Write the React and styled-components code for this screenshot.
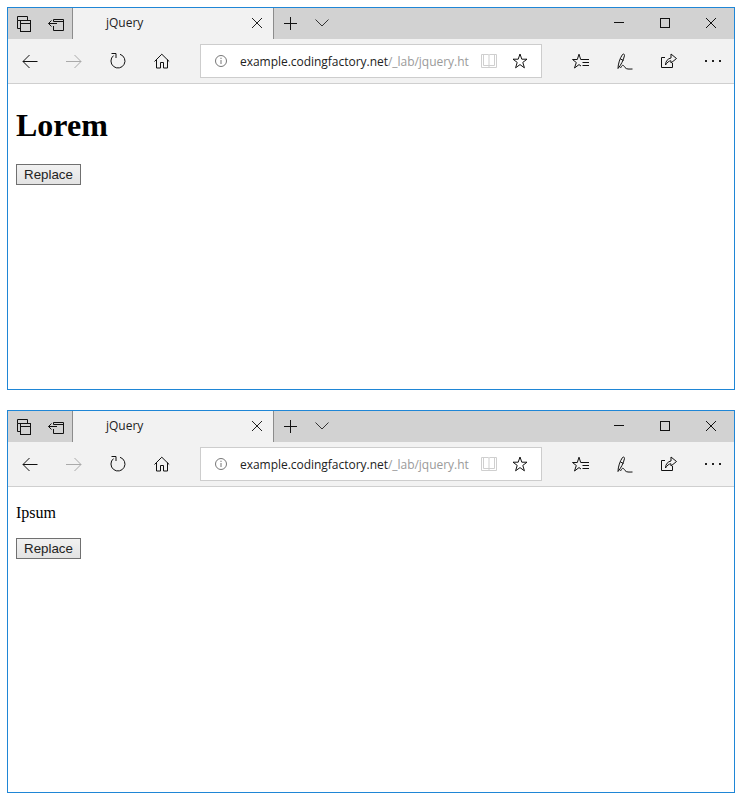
import React from "react";
import styled, { createGlobalStyle } from "styled-components";

const Global = createGlobalStyle`
  html, body { margin: 0; padding: 0; background: #fff; }
  * { box-sizing: border-box; }
`;

const Page = styled.div`
  display: flex;
  flex-direction: column;
  gap: 20px;
  padding: 7px 0 0 7px;
  width: 749px;
  height: 804px;
`;

const Window = styled.section`
  width: 728px;
  height: 383px;
  border: 1px solid #1f86d6;
  display: flex;
  flex-direction: column;
  background: #fff;
`;

const Strip = styled.header`
  display: flex;
  align-items: stretch;
  height: 31px;
  background: #d2d2d2;
  flex: none;
`;

const StripGroup = styled.div`
  display: flex;
  align-items: flex-start;
  width: ${(p) => p.$width}px;
  margin-left: ${(p) => p.$offset || 0}px;
  flex: none;
`;

const StripIcon = styled.span`
  display: flex;
  align-items: center;
  justify-content: center;
  width: ${(p) => p.$width || 32}px;
  height: 30px;
  flex: none;
`;

const Tab = styled.div`
  width: 202px;
  flex: none;
  display: flex;
  align-items: center;
  background: #f2f2f2;
  border-left: 1px solid #8c8c8c;
  border-right: 1px solid #8c8c8c;
  padding: 0 0 1px 32px;
  font: 12px "Open Sans", "Noto Sans", sans-serif;
  color: #222;
`;

const TabTitle = styled.span`
  flex: 1;
  padding: 0 0 2px 1px;
`;

const TabClose = styled.span`
  display: flex;
  justify-content: center;
  align-items: center;
  width: 32px;
  height: 100%;
`;

const Toolbar = styled.nav`
  display: flex;
  align-items: center;
  height: 45px;
  flex: none;
  background: #f2f2f2;
  border-bottom: 1px solid #cfcfcf;
`;

const ToolButton = styled.span`
  display: flex;
  align-items: center;
  justify-content: center;
  width: 44px;
  height: 44px;
  flex: none;
`;

const ToolGroup = styled.div`
  display: flex;
  flex: none;
`;

const Address = styled.div`
  display: flex;
  align-items: center;
  width: 342px;
  height: 34px;
  margin: 0 17px 0 16px;
  background: #fff;
  border: 1px solid #cdcdcd;
  flex: none;
`;

const InfoSlot = styled.span`
  display: flex;
  justify-content: center;
  width: 39px;
  flex: none;
`;

const Url = styled.div`
  width: 230px;
  flex: none;
  white-space: nowrap;
  overflow: hidden;
  font: 12px "Open Sans", "Noto Sans", sans-serif;
  letter-spacing: -0.03px;
  color: #222;
`;

const UrlPath = styled.span`
  color: #9a9a9a;
`;

const AddressIcon = styled.span`
  display: flex;
  justify-content: center;
  flex: none;
  width: ${(p) => p.$width}px;
`;

const Content = styled.main`
  flex: 1;
  padding: ${(p) => p.$top || 0}px 8px 0;
  font-family: "Liberation Serif", "Times New Roman", serif;
  color: #000;
`;

const Heading = styled.h1`
  font-size: 32px;
  font-weight: 700;
  line-height: 37px;
  margin: 23px 0 19.88px;
`;

const Para = styled.p`
  font-size: 16px;
  line-height: 18px;
  margin: 16px 0;
`;

const ReplaceButton = styled.button`
  display: block;
  width: 65px;
  height: 21px;
  margin: 0;
  padding: 0;
  border: 1px solid #707070;
  border-radius: 0;
  background: linear-gradient(#f1f1f1, #e3e3e3);
  font: 13.333px "Liberation Sans", Arial, sans-serif;
  color: #222;
`;

const Svg = ({ size = 20, children, stroke = "#111", sw = 1 }) => (
  <svg
    width={size}
    height={size}
    viewBox={`0 0 ${size} ${size}`}
    fill="none"
    stroke={stroke}
    strokeWidth={sw}
    aria-hidden="true"
  >
    {children}
  </svg>
);

const TabsAside = () => (
  <Svg>
    <path d="M6.5 7.5H3.5V3.5H13.5V7.5" />
    <path d="M3.5 7.5V15.5H6.5" />
    <rect x="6.5" y="7.5" width="10" height="11" />
    <path d="M6.5 10.5H16.5" />
  </Svg>
);

const SetAside = () => (
  <Svg>
    <path d="M7.5 8.5V6.5H17.5V17.5H7.5V13" />
    <path d="M7.5 8.5H17.5" />
    <path d="M2.5 10.5H11M5.5 7.5L2.5 10.5L5.5 13.5" />
  </Svg>
);

const CloseX = ({ s = 10, stroke = "#222" }) => (
  <Svg size={s} stroke={stroke}>
    <path d={`M0 0L${s} ${s}M${s} 0L0 ${s}`} />
  </Svg>
);

const Plus = () => (
  <Svg size={13}>
    <path d="M6.5 0V13M0 6.5H13" />
  </Svg>
);

const Chevron = () => (
  <Svg size={14} stroke="#333">
    <path d="M0.5 3.5L7 10L13.5 3.5" />
  </Svg>
);

const Minimize = () => (
  <Svg size={12}>
    <path d="M1 5.5H11" />
  </Svg>
);

const Maximize = () => (
  <Svg size={12}>
    <rect x="1.5" y="1.5" width="9" height="9" />
  </Svg>
);

const ArrowLeft = () => (
  <Svg>
    <path d="M3 10.5H17.5M9.5 4L3 10.5L9.5 17" />
  </Svg>
);

const ArrowRight = () => (
  <Svg stroke="#aaa">
    <path d="M2 10.5H17M10.5 4L17 10.5L10.5 17" />
  </Svg>
);

const Refresh = () => (
  <Svg>
    <path d="M5.5 4.6A7 7 0 1 0 12 3.3" />
    <path d="M3.5 2.5H8V7" />
  </Svg>
);

const Home = () => (
  <Svg>
    <path d="M2.5 10.5L9.8 3.2L17.2 10.5" />
    <path d="M4.5 8.5V17H8.5V11.5H11.5V17H15.5V8.5" />
  </Svg>
);

const Info = () => (
  <Svg size={14} stroke="#777">
    <circle cx="7" cy="7" r="5.5" />
    <path d="M7 6V10M7 3.7V5" />
  </Svg>
);

const Book = () => (
  <Svg stroke="#cfcfcf">
    <path d="M2.5 3.5H9.5L10 4.5L10.5 3.5H17.5V16.5H2.5Z" />
    <path d="M4.5 3.5V14.5H10V4.5M15.5 3.5V14.5H10" />
    <path d="M10 14.5V17" />
  </Svg>
);

const Star = () => (
  <Svg>
    <path d="M10 3L11.8 8.2H17L12.8 11.4L14.4 16.8L10 13.6L5.6 16.8L7.2 11.4L3 8.2H8.2Z" />
  </Svg>
);

const Favorites = () => (
  <Svg>
    <path d="M14 8.5H9.7L8 3.2L6.3 8.5H1.5L5.3 11.5L3.5 17L8 13.6L10 15" />
    <path d="M11.5 8.5H18M11.5 11.5H18M11.5 14.5H18" />
  </Svg>
);

const Pen = () => (
  <Svg>
    <path d="M3 17.5C3 13 5 7 7.5 3.5C8.2 2.6 9.8 3.2 9.5 4.5C8.5 9 6 14 3 17.5Z" />
    <path d="M5.5 8L8.5 9.5" />
    <path d="M5.5 17C7.5 13 8.5 14 10 16.5C11.5 18.5 14 18 17.5 18" />
  </Svg>
);

const Share = () => (
  <Svg>
    <path d="M6 6.5H2.5V16.5H13.5V12" />
    <path d="M6.5 14C6.5 10 9 7.5 12 7V3L17.5 7.5L12 12V9.8C10 9.8 8 11.5 6.5 14Z" />
  </Svg>
);

const More = () => (
  <Svg stroke="none">
    <rect x="2" y="9" width="2" height="2" fill="#222" />
    <rect x="9" y="9" width="2" height="2" fill="#222" />
    <rect x="16" y="9" width="2" height="2" fill="#222" />
  </Svg>
);

const Browser = ({ children, contentTop }) => (
  <Window>
    <Strip>
      <StripGroup $width={64}>
        <StripIcon><TabsAside /></StripIcon>
        <StripIcon><SetAside /></StripIcon>
      </StripGroup>
      <Tab>
        <TabTitle>jQuery</TabTitle>
        <TabClose><CloseX /></TabClose>
      </Tab>
      <StripGroup $width={64}>
        <StripIcon><Plus /></StripIcon>
        <StripIcon><Chevron /></StripIcon>
      </StripGroup>
      <StripGroup $width={138} $offset={258}>
        <StripIcon $width={46}><Minimize /></StripIcon>
        <StripIcon $width={46}><Maximize /></StripIcon>
        <StripIcon $width={46}><CloseX s={10} stroke="#111" /></StripIcon>
      </StripGroup>
    </Strip>
    <Toolbar>
      <ToolGroup>
        <ToolButton><ArrowLeft /></ToolButton>
        <ToolButton><ArrowRight /></ToolButton>
        <ToolButton><Refresh /></ToolButton>
        <ToolButton><Home /></ToolButton>
      </ToolGroup>
      <Address>
        <InfoSlot><Info /></InfoSlot>
        <Url>
          example.codingfactory.net<UrlPath>/_lab/jquery.ht</UrlPath>
        </Url>
        <AddressIcon $width={37}><Book /></AddressIcon>
        <AddressIcon $width={25}><Star /></AddressIcon>
      </Address>
      <ToolGroup>
        <ToolButton><Favorites /></ToolButton>
        <ToolButton><Pen /></ToolButton>
        <ToolButton><Share /></ToolButton>
        <ToolButton><More /></ToolButton>
      </ToolGroup>
    </Toolbar>
    <Content $top={contentTop}>{children}</Content>
  </Window>
);

export default function App() {
  return (
    <>
      <Global />
      <Page>
        <Browser>
          <Heading>Lorem</Heading>
          <ReplaceButton>Replace</ReplaceButton>
        </Browser>
        <Browser contentTop={1}>
          <Para>Ipsum</Para>
          <ReplaceButton>Replace</ReplaceButton>
        </Browser>
      </Page>
    </>
  );
}
